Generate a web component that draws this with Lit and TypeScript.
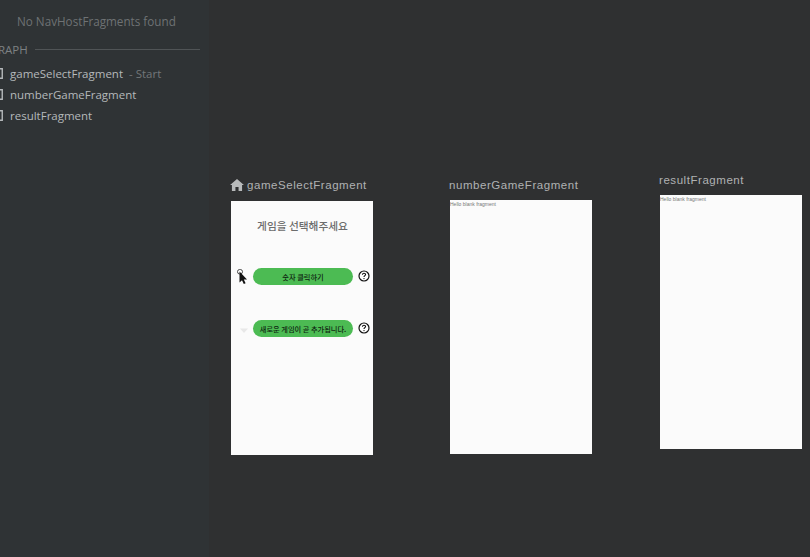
import { LitElement, html, css } from "lit";
import { customElement } from "lit/decorators.js";

const docIcon = html`<svg class="doc" width="4" height="11" viewBox="0 0 4 11"><path d="M-5 .75H2.25V10.25H-5" fill="none" stroke="#b4b8ba" stroke-width="1.4"/></svg>`;
const help = html`<svg class="q" width="12" height="12" viewBox="0 0 12 12"><circle cx="6" cy="6" r="5" fill="#fff" stroke="#111" stroke-width="1.2"/><path d="M4.4 4.7C4.5 3.7 5.1 3.2 6 3.2S7.6 3.8 7.6 4.6C7.6 5.6 6 5.8 6 7" fill="none" stroke="#111" stroke-width="1.1"/><circle cx="6" cy="8.6" r=".7" fill="#111"/></svg>`;
const blank = html`<div class="hello">Hello blank fragment</div>`;

@customElement("app-root")
export class AppRoot extends LitElement {
  static styles = css`
    :host { display: block; width: 810px; height: 557px; overflow: hidden; background: #2f3031; position: relative; }
    .sidebar { width: 209px; height: 557px; background: #2f3335; font-family: "Open Sans", sans-serif; font-size: 11.5px; color: #b5b9bb; overflow: hidden; box-sizing: border-box; padding-top: 13px; }
    .empty { color: #6e7274; padding-left: 17px; height: 17px; line-height: 17px; font-size: 11.7px; white-space: nowrap; }
    .section { display: flex; align-items: center; margin-top: 10px; height: 18px; color: #7d8183; margin-left: -10.4px; width: 210.4px; }
    .section span { flex: none; }
    .section i { flex: 1; height: 1px; background: #505456; margin-left: 7px; }
    .rows { margin-top: 7px; display: flex; flex-direction: column; gap: 4px; }
    .row { display: flex; align-items: center; height: 17px; white-space: nowrap; }
    .doc { flex: none; margin-right: 6px; }
    .row em { font-style: normal; color: #73777a; margin-left: 6px; }
    .frame { position: absolute; width: 142px; height: 254px; background: #fbfbfb; }
    .label { position: absolute; font-family: "Liberation Sans", sans-serif; font-size: 11.5px; letter-spacing: .55px; color: #b0b2b3; white-space: nowrap; line-height: 14px; }
    .hello { font-family: "Liberation Sans", sans-serif; font-size: 5px; color: #777; line-height: 6px; padding-top: 1px; white-space: nowrap; }
    .title { position: absolute; left: 1px; right: 0; top: 18px; text-align: center; font-family: "Noto Sans CJK KR", sans-serif; font-size: 10.7px; font-weight: 500; line-height: 14px; color: #6c6c6c; }
    .btn { position: absolute; left: 22px; width: 100px; height: 17px; border-radius: 9px; background: #4cbb53; display: flex; align-items: center; justify-content: center; font-family: "Noto Sans CJK KR", sans-serif; font-size: 7.2px; font-weight: 500; color: #0e2410; white-space: nowrap; }
    .help { position: absolute; left: 127px; width: 12px; height: 12px; }
    .q { display: block; }
    .home { position: absolute; left: 230px; top: 179px; }
    .cursor { position: absolute; left: 6px; top: 68px; }
    .wifi { position: absolute; left: 9px; top: 127px; }
  `;

  render() {
    return html`
      <div class="sidebar">
        <div class="empty">No NavHostFragments found</div>
        <div class="section"><span>GRAPH</span><i></i></div>
        <div class="rows">
          <div class="row">${docIcon}gameSelectFragment<em>- Start</em></div>
          <div class="row">${docIcon}numberGameFragment</div>
          <div class="row">${docIcon}resultFragment</div>
        </div>
      </div>

      <svg class="home" width="14" height="12" viewBox="0 0 15 13"><path d="M7.5 0 15 6.6H13V13H9.2V8.6H5.8V13H2V6.6H0Z" fill="#b8babb"/></svg>
      <div class="label" style="left:247px;top:178px">gameSelectFragment</div>
      <div class="frame" style="left:231px;top:201px">
        <div class="title">게임을 선택해주세요</div>
        <svg class="cursor" width="11" height="16" viewBox="0 0 11 16">
          <rect x=".5" y=".5" width="5" height="4.5" rx="2.2" fill="#fff" stroke="#333" stroke-width=".9"/>
          <path d="M2.5 2.5 2.5 13.5 5 11.2 6.8 15 8.6 14.2 6.8 10.6 10 10.6Z" fill="#111"/>
        </svg>
        <div class="btn" style="top:67px">숫자 클릭하기</div>
        <div class="help" style="top:69px">${help}</div>
        <svg class="wifi" width="8" height="5" viewBox="0 0 8 5"><path d="M0 .5H8L4 5Z" fill="#e8e8e8"/></svg>
        <div class="btn" style="top:119px">새로운 게임이 곧 추가됩니다.</div>
        <div class="help" style="top:121px">${help}</div>
      </div>

      <div class="label" style="left:449px;top:178px">numberGameFragment</div>
      <div class="frame" style="left:450px;top:200px">${blank}</div>

      <div class="label" style="left:659px;top:173px">resultFragment</div>
      <div class="frame" style="left:660px;top:195px">${blank}</div>
    `;
  }
}
